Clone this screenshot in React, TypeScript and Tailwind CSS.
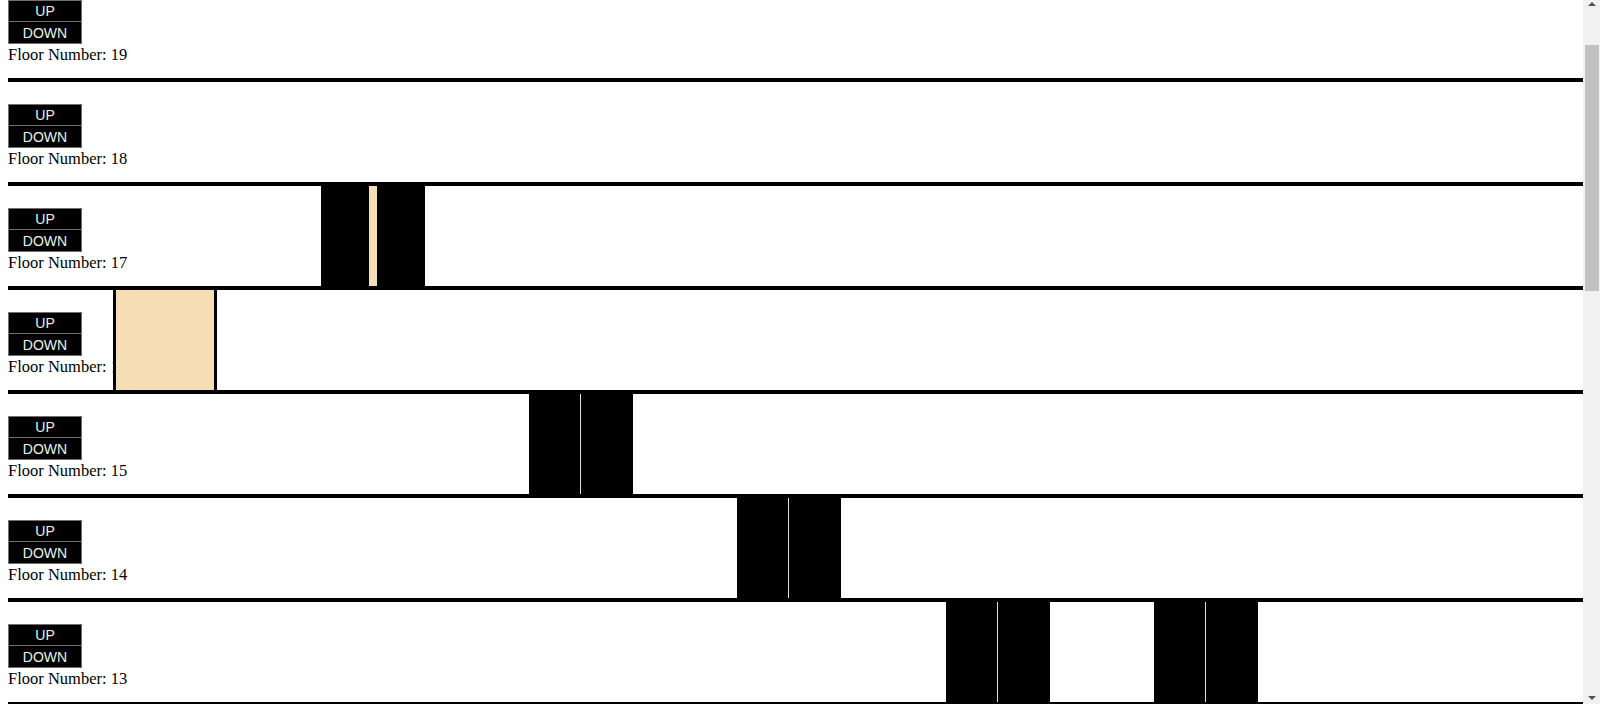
import React from "react";

type Door = "closed" | "opening" | "open";
type Car = { shaft: number; state: Door };

const floors: { n: number; cars: Car[] }[] = [
  { n: 19, cars: [] },
  { n: 18, cars: [] },
  { n: 17, cars: [{ shaft: 1, state: "opening" }] },
  { n: 16, cars: [{ shaft: 0, state: "open" }] },
  { n: 15, cars: [{ shaft: 2, state: "closed" }] },
  { n: 14, cars: [{ shaft: 3, state: "closed" }] },
  { n: 13, cars: [{ shaft: 4, state: "closed" }, { shaft: 5, state: "closed" }] },
];

function Elevator({ car }: { car: Car }) {
  const left = Math.floor(105 + 208.25 * car.shaft);
  if (car.state === "open") {
    return (
      <div
        className="absolute top-0 h-[100px] w-[104px] bg-[#f5deb3] border-x-[3px] border-black"
        style={{ left }}
      />
    );
  }
  if (car.state === "opening") {
    return (
      <div className="absolute top-0 h-[100px] w-[104px] flex bg-[#f5deb3]" style={{ left }}>
        <div className="w-[48px] h-full bg-black" />
        <div className="w-[8px] h-full" />
        <div className="w-[48px] h-full bg-black" />
      </div>
    );
  }
  return (
    <div className="absolute top-0 h-[100px] w-[104px] flex bg-[#e6e0d0]" style={{ left }}>
      <div className="w-[51px] h-full bg-black" />
      <div className="w-[1px] h-full" />
      <div className="w-[52px] h-full bg-black" />
    </div>
  );
}

function Floor({ n, cars }: { n: number; cars: Car[] }) {
  return (
    <div className="relative h-[104px] border-b-4 border-black pt-[22px]">
      <div className="flex flex-col w-[74px]">
        <button className="h-[22px] w-[74px] bg-black border border-[#707070] text-[#eaf3ea] text-[14px] leading-none font-['Liberation_Sans',Arial,sans-serif]">
          UP
        </button>
        <button className="h-[22px] w-[74px] bg-black border border-[#707070] border-t-0 text-[#eaf3ea] text-[14px] leading-none font-['Liberation_Sans',Arial,sans-serif]">
          DOWN
        </button>
      </div>
      <div className="whitespace-nowrap text-[16.5px] leading-[22px] text-black font-['Liberation_Serif','Times_New_Roman',serif]">
        Floor Number: {n}
      </div>
      {cars.map((c, i) => (
        <Elevator key={i} car={c} />
      ))}
    </div>
  );
}

export default function App() {
  return (
    <div className="flex h-[704px] w-[1600px] overflow-hidden bg-white">
      <div className="flex-1 h-full overflow-hidden pl-2">
        <div className="-mt-[22px]">
          {floors.map((f) => (
            <Floor key={f.n} n={f.n} cars={f.cars} />
          ))}
        </div>
      </div>
      <div className="w-[17px] h-full bg-[#f1f1f1] flex flex-col items-center">
        <div className="h-[17px] w-full flex items-start justify-center pt-[2px]">
          <div className="w-0 h-0 border-x-[4px] border-x-transparent border-b-[4px] border-b-[#505050]" />
        </div>
        <div className="mt-[28px] h-[246px] w-[14px] bg-[#c1c1c1]" />
        <div className="flex-1" />
        <div className="h-[17px] w-full flex items-end justify-center pb-[4px]">
          <div className="w-0 h-0 border-x-[4px] border-x-transparent border-t-[4px] border-t-[#505050]" />
        </div>
      </div>
    </div>
  );
}
